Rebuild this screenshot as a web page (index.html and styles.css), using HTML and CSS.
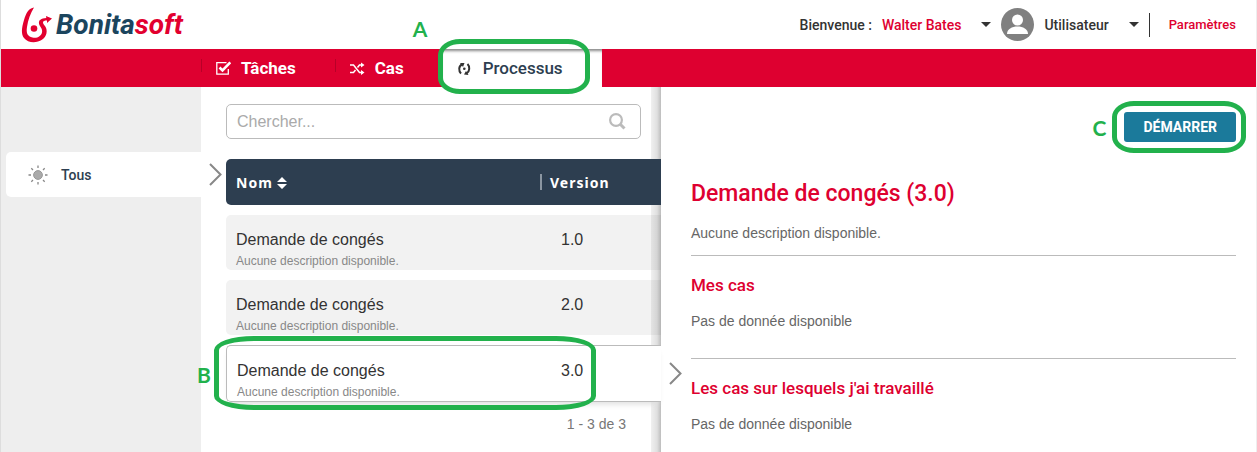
FILE: index.html
```html
<!DOCTYPE html>
<html lang="fr">
<head>
<meta charset="utf-8">
<title>Bonitasoft – Processus</title>
<link rel="stylesheet" href="styles.css">
</head>
<body>
<div class="app">
  <header class="header">
    <a class="logo" href="#" aria-label="Bonitasoft">
      <svg class="logo-mark" viewBox="0 0 32 36" aria-hidden="true">
        <path d="M13 0.500C8 1 5 6 3 13C0.500 21 0 27 3 31C6 35 12 36 17 34.500C23 33 26.500 28 25.500 22.500C25 19 22 17.500 22 15.500C22 14 23.500 13.500 26 13.500L26 16L31 11.500L25 9L25.300 11C20 11.500 17.500 13 18 16.500C18.500 20 22 21.500 21 25.500C20 29.500 16 31.500 11.500 30.500C6.500 29.500 5 26 6 20C7 13 9.500 6 13 0.500Z" fill="#e2002f"/>
        <circle cx="13" cy="21.500" r="3.300" fill="#e2002f"/>
      </svg>
      <span class="logo-text">Bonita<span class="logo-soft">soft</span></span>
    </a>
    <div class="account">
      <span class="welcome">Bienvenue :</span>
      <button class="menu menu-user" type="button">Walter Bates<span class="caret"></span></button>
      <svg class="avatar" viewBox="0 0 33 33" role="img" aria-label="Avatar">
        <circle cx="16.500" cy="16.500" r="16.500" fill="#808080"/>
        <circle cx="16.500" cy="12" r="5.500" fill="#fff"/>
        <path d="M6 26C6 21 11 18.500 16.500 18.500S27 21 27 26Z" fill="#fff"/>
      </svg>
      <button class="menu menu-role" type="button">Utilisateur<span class="caret"></span></button>
      <a class="settings" href="#">Paramètres</a>
    </div>
  </header>

  <nav class="nav">
    <a class="tab" href="#">
      <svg class="icon" viewBox="0 0 15 15" fill="none" stroke="#fff" aria-hidden="true">
        <path d="M10.500 1.700H0.800V13.200H12.300V8" stroke-width="1.300"/>
        <path d="M3.500 6.500L6.500 9.500L14.300 1.300" stroke-width="2.600"/>
      </svg>
      Tâches
    </a>
    <a class="tab" href="#">
      <svg class="icon" viewBox="0 0 15 15" fill="none" stroke="#fff" stroke-width="1.500" aria-hidden="true">
        <path d="M0 4H3.500L9.500 11.500H13M0 11.500H3.500L5.500 9M7.500 6.500L9.500 4H13"/>
        <path d="M11 1.500L14.500 4L11 6.500ZM11 9L14.500 11.500L11 14Z" fill="#fff" stroke="none"/>
      </svg>
      Cas
    </a>
    <a class="tab tab-active" href="#" aria-current="page">
      <svg class="icon" viewBox="0 0 15 15" fill="none" stroke="#333" stroke-width="2" aria-hidden="true">
        <path d="M4 3.500C0.500 5 0.500 10 3 12.500M8.500 12.500C12 10.500 12 5.500 9.500 3"/>
        <path d="M2 2L6.500 2L5 6ZM10.500 14L6 13.500L8 10Z" fill="#333" stroke="none"/>
        <circle cx="6.300" cy="7.800" r="1.300" fill="#333" stroke="none"/>
      </svg>
      Processus
      <span class="mark mark-a"><span class="mark-label">A</span></span>
    </a>
  </nav>

  <main class="content">
    <aside class="sidebar">
      <a class="filter" href="#">
        <svg class="sun" viewBox="0 0 20 20" stroke="#888" stroke-width="1.300" aria-hidden="true">
          <circle cx="10" cy="10" r="4.400" fill="#aaa" stroke="#999" stroke-width="1"/>
          <path d="M10 0.500V3M10 17V19.500M0.500 10H3M17 10H19.500M3.300 3.300L5 5M15 15L16.700 16.700M16.700 3.300L15 5M5 15L3.300 16.700"/>
        </svg>
        Tous
        <svg class="chevron" viewBox="0 0 13 23" fill="none" stroke="#888" stroke-width="2" aria-hidden="true"><path d="M1 1L11.500 11.500L1 22"/></svg>
      </a>
    </aside>

    <section class="list">
      <form class="search">
        <input class="search-input" type="search" placeholder="Chercher..." aria-label="Chercher">
        <button class="search-button" type="button" aria-label="Lancer la recherche">
          <svg class="search-icon" viewBox="0 0 17 17" fill="none" stroke="#bbb" aria-hidden="true"><circle cx="7" cy="7" r="5.900" stroke-width="2.200"/><path d="M11 11L15.500 15.500" stroke-width="3"/></svg>
        </button>
      </form>
      <table class="processes">
        <thead>
          <tr>
            <th class="col-name" scope="col">Nom
              <svg class="sort" viewBox="0 0 10 12" fill="#fff" aria-hidden="true"><path d="M5 0L10 5H0ZM0 7H10L5 12Z"/></svg>
            </th>
            <th class="col-version" scope="col">Version</th>
          </tr>
        </thead>
        <tbody>
          <tr>
            <td><span class="name">Demande de congés</span><span class="desc">Aucune description disponible.</span></td>
            <td class="version">1.0</td>
          </tr>
          <tr>
            <td><span class="name">Demande de congés</span><span class="desc">Aucune description disponible.</span></td>
            <td class="version">2.0</td>
          </tr>
          <tr class="selected">
            <td><span class="name">Demande de congés</span><span class="desc">Aucune description disponible.</span>
              <span class="mark mark-b"><span class="mark-label">B</span></span>
            </td>
            <td class="version">3.0
              <svg class="chevron" viewBox="0 0 13 23" fill="none" stroke="#888" stroke-width="2" aria-hidden="true"><path d="M1 1L11.500 11.500L1 22"/></svg>
            </td>
          </tr>
        </tbody>
      </table>
      <p class="pager">1 - 3 de 3</p>
    </section>

    <article class="detail">
      <div class="actions">
        <span class="action"><button class="start" type="button">DÉMARRER</button><span class="mark mark-c"><span class="mark-label">C</span></span></span>
      </div>
      <h1 class="title">Demande de congés (3.0)</h1>
      <p class="text">Aucune description disponible.</p>
      <section class="block">
        <h2 class="subtitle">Mes cas</h2>
        <p class="text">Pas de donnée disponible</p>
      </section>
      <section class="block">
        <h2 class="subtitle">Les cas sur lesquels j'ai travaillé</h2>
        <p class="text">Pas de donnée disponible</p>
      </section>
    </article>
  </main>
</div>
</body>
</html>
```

FILE: styles.css
```css
* { box-sizing: border-box; }

body {
  margin: 0;
  font-family: "Liberation Sans", Arial, sans-serif;
  color: #333;
  background: #fff;
}

a { color: inherit; text-decoration: none; }

button { font: inherit; color: inherit; background: none; border: 0; padding: 0; cursor: pointer; }

.app {
  display: flex;
  flex-direction: column;
  min-height: 100vh;
  border-left: 1px solid #ddd;
  border-right: 1px solid #eee;
}

.header {
  display: flex;
  justify-content: space-between;
  align-items: center;
  height: 49px;
  padding: 0 20px;
  font-family: Roboto, sans-serif;
  font-size: 14px;
  font-weight: 500;
}

.logo { display: flex; align-items: center; gap: 3px; }
.logo-mark { width: 32px; height: 36px; }
.logo-text {
  font-family: "Liberation Sans Narrow", "Arial Narrow", Roboto, sans-serif;
  font-size: 28px;
  line-height: 36px;
  font-weight: 700;
  font-style: italic;
  color: #1b455e;
}
.logo-soft { color: #e2002f; }

.account { display: flex; align-items: center; gap: 10px; }
.menu { display: flex; align-items: center; gap: 20px; }
.menu-user { color: #de0030; }
.caret {
  border: 5px solid transparent;
  border-top-color: #333;
  border-bottom: 0;
}
.avatar { width: 33px; height: 33px; }
.settings {
  padding-left: 19px;
  border-left: 1px solid #333;
  font-size: 13px;
  line-height: 24px;
  color: #de0030;
}

.nav {
  display: flex;
  height: 38px;
  padding-left: 200px;
  background: #de0030;
  font-family: Roboto, sans-serif;
  font-size: 17px;
  font-weight: 700;
  color: #fff;
}
.tab {
  position: relative;
  display: flex;
  align-items: center;
  gap: 10px;
  padding: 0 39px 0 15px;
}
.tab::before {
  content: "";
  position: absolute;
  left: 0;
  top: 10px;
  width: 1px;
  height: 13px;
  background: #b80028;
}
.tab-active {
  background: #fff;
  color: #2d3e50;
  font-weight: 500;
  box-shadow: inset 0 4px 3px -2px #888;
}
.tab-active::before { display: none; }
.icon { width: 15px; height: 15px; }

.content {
  display: grid;
  grid-template-columns: 200px 460px minmax(0, 1fr);
  flex: 1;
}

.sidebar { padding: 65px 0 0 5px; background: #eee; }
.filter {
  position: relative;
  display: flex;
  align-items: center;
  gap: 13px;
  height: 45px;
  padding-left: 22px;
  border-radius: 5px 0 0 5px;
  background: #fff;
  font-family: Roboto, sans-serif;
  font-size: 14px;
  font-weight: 500;
  color: #2d3e50;
}
.sun { width: 20px; height: 20px; }
.chevron {
  position: absolute;
  right: -21px;
  top: 11px;
  width: 13px;
  height: 23px;
}

.list { position: relative; padding: 17px 0 0 25px; }
.list::after {
  content: "";
  position: absolute;
  top: 0;
  right: 0;
  bottom: 0;
  width: 10px;
  background: linear-gradient(to right, rgba(0, 0, 0, 0.06), rgba(0, 0, 0, 0.12) 60%, rgba(0, 0, 0, 0.26));
}

.search {
  display: flex;
  align-items: center;
  height: 35px;
  margin: 0 20px 10px 0;
  padding: 0 14px 0 10px;
  border: 1px solid #bbb;
  border-radius: 5px;
}
.search-input {
  flex: 1;
  min-width: 0;
  padding: 0;
  border: 0;
  outline: 0;
  background: none;
  font: inherit;
  font-size: 16px;
}
.search-input::placeholder { color: #aaa; }
.search-icon { display: block; width: 17px; height: 17px; }

.processes {
  width: 100%;
  border-spacing: 0 10px;
  table-layout: fixed;
}
.processes th, .processes td { padding: 0 0 0 10px; text-align: left; }
.processes thead tr, .selected { position: relative; z-index: 1; }
.processes th {
  height: 46px;
  background: #2d3e50;
  color: #fff;
  font-family: "Noto Sans", sans-serif;
  font-size: 14px;
  font-weight: 700;
  letter-spacing: 1px;
}
.processes th:first-child, .processes td:first-child { border-radius: 5px 0 0 5px; }
.col-name { width: 314px; }
.sort { width: 10px; height: 12px; vertical-align: -1px; }
.col-version::before {
  content: "";
  position: absolute;
  left: 314px;
  top: 15px;
  width: 2px;
  height: 16px;
  background: #8b96a1;
}
.processes td { height: 55px; background: #f2f2f2; vertical-align: top; }
.name, .desc { display: block; }
.name { padding-top: 15px; font-size: 16px; line-height: 20px; }
.desc { font-size: 12px; line-height: 22px; color: #888; }
.processes td .desc { height: 20px; }
.processes .version { padding: 15px 0 0 21px; font-size: 16px; line-height: 20px; }
.selected { box-shadow: 0 5px 6px -3px #ddd; }
.processes .selected td {
  height: 57px;
  background: #fff;
  border: solid #bbb;
  border-width: 1px 0;
}
.processes .selected td:first-child { border-left-width: 1px; }
.selected .chevron { top: 17px; }

.pager {
  margin: 0;
  padding: 2px 35px 0 0;
  text-align: right;
  font-size: 14px;
  line-height: 20px;
  color: #777;
}

.detail { padding: 25px 20px 0 30px; }
.actions { display: flex; justify-content: flex-end; }
.action { position: relative; display: flex; }
.start {
  height: 30px;
  padding: 0 19px;
  border-radius: 3px;
  background: #1b7a9b;
  color: #fff;
  font-family: Roboto, sans-serif;
  font-size: 14px;
  font-weight: 700;
}
.title, .subtitle {
  margin: 0;
  font-family: Roboto, sans-serif;
  font-weight: 500;
  color: #de0030;
}
.title { padding-top: 36px; font-size: 23px; line-height: 32px; }
.subtitle { font-size: 17px; line-height: 24px; }
.text { margin: 0; font-size: 14px; line-height: 20px; color: #666; }
.title + .text { margin: 13px 0 12px; }
.block { padding: 17px 0 27px; border-top: 1px solid #bbb; }
.subtitle + .text { margin-top: 14px; }

.mark {
  position: absolute;
  z-index: 2;
  border: 5px solid #22b14c;
  border-radius: 22px / 16px;
  pointer-events: none;
}
.mark-label {
  position: absolute;
  font-family: Lato, sans-serif;
  font-size: 21px;
  line-height: 20px;
  font-weight: 700;
  color: #22b14c;
}
.mark-a { left: -5px; right: 12px; top: -10px; bottom: -7px; }
.mark-a .mark-label { left: -30px; top: -25px; }
.mark-b { left: -12px; top: -9px; width: 382px; height: 74px; border-radius: 40px / 14px; }
.mark-b .mark-label { left: -22px; top: 24px; }
.mark-c { left: -12px; right: -10px; top: -11px; bottom: -11px; }
.mark-c .mark-label { left: -25px; top: 12px; }
```
